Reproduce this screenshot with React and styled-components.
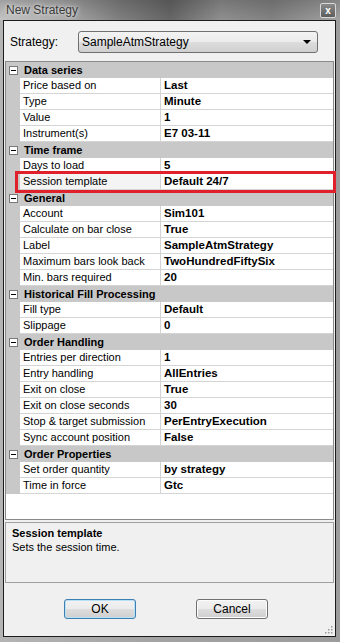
import React from "react";
import styled, { createGlobalStyle } from "styled-components";

const GlobalStyle = createGlobalStyle`
  html, body { margin: 0; padding: 0; background: #a8a8a8; }
  * { box-sizing: border-box; }
`;

const Window = styled.div`
  width: 340px;
  height: 642px;
  display: flex;
  flex-direction: column;
  background: linear-gradient(90deg, #b4b4b4 0%, #a2a2a2 50%, #9c9c9c 100%);
  font-family: "Liberation Sans", Arial, sans-serif;
  overflow: hidden;
`;

const TitleBar = styled.div`
  height: 20px;
  flex: none;
  display: flex;
  align-items: center;
  justify-content: space-between;
  padding: 0 4px 0 6px;
  background:
    linear-gradient(180deg, rgba(60,60,60,0.25) 0%, rgba(255,255,255,0.05) 100%),
    linear-gradient(90deg, #c2c2c2 0%, #a9a9a9 18%, #7a7a7a 35%, #5e5e5e 50%, #8a8a8a 65%, #7c7c7c 80%, #9e9e9e 100%);
`;

const Title = styled.span`
  font-size: 12px;
  color: #3a3a3a;
  text-shadow: 0 0 6px rgba(255,255,255,0.8), 0 0 3px rgba(255,255,255,0.6);
`;

const CloseButton = styled.div`
  width: 16px;
  height: 15px;
  margin-top: 1px;
  border: 1px solid #d8d8d8;
  border-radius: 2px;
  background: linear-gradient(180deg, #8a8a8a 0%, #5c5c5c 100%);
  color: #fff;
  font-size: 10px;
  font-weight: bold;
  display: flex;
  align-items: center;
  justify-content: center;
  line-height: 1;
`;

const Client = styled.div`
  flex: 1;
  margin: 0 4px 5px 3px;
  border: 1px solid #1c1c1c;
  background: #f0f0f0;
  display: flex;
  flex-direction: column;
  position: relative;
`;

const StrategyRow = styled.div`
  height: 40px;
  display: flex;
  align-items: flex-start;
  padding: 10px 0 0 6px;
`;

const StrategyLabel = styled.span`
  font-size: 12px;
  color: #000;
  width: 68px;
  line-height: 22px;
`;

const Combo = styled.div`
  width: 240px;
  height: 22px;
  border: 1px solid #707070;
  border-radius: 3px;
  background: linear-gradient(180deg, #f3f3f3 0%, #ebebeb 48%, #dddddd 52%, #cfcfcf 100%);
  display: flex;
  align-items: center;
  justify-content: space-between;
  padding: 0 6px 0 3px;
  font-size: 12px;
  color: #000;
`;

const Arrow = styled.span`
  width: 0;
  height: 0;
  border-left: 4px solid transparent;
  border-right: 4px solid transparent;
  border-top: 4px solid #000;
`;

const Grid = styled.div`
  margin: 0 1px 0 1px;
  height: 459px;
  border: 1px solid #8a8a8a;
  background: #fff;
  display: flex;
  flex-direction: column;
`;

const CategoryRow = styled.div`
  height: 16px;
  flex: none;
  display: flex;
  align-items: center;
  background: #c8c8c8;
  font-size: 11px;
  font-weight: bold;
  color: #000;
`;

const Expander = styled.span`
  width: 9px;
  height: 9px;
  margin: 0 6px 0 3px;
  border: 1px solid #7a7a7a;
  background: #fff;
  position: relative;
  &::after {
    content: "";
    position: absolute;
    left: 1px;
    right: 1px;
    top: 3px;
    height: 1px;
    background: #000;
  }
`;

const PropRow = styled.div`
  height: 16px;
  flex: none;
  display: flex;
  position: relative;
  font-size: 11px;
  color: #000;
`;

const Gutter = styled.div`
  width: 14px;
  flex: none;
  background: #c8c8c8;
`;

const Label = styled.div`
  width: 141px;
  flex: none;
  padding-left: 3px;
  line-height: 15px;
  border-bottom: 1px solid #d4d4d4;
  border-right: 1px solid #d4d4d4;
  background: ${(p) => (p.$selected ? "#f4f4f4" : "#fff")};
  white-space: nowrap;
  overflow: hidden;
`;

const Value = styled.div`
  flex: 1;
  padding-left: 3px;
  line-height: 15px;
  border-bottom: 1px solid #d4d4d4;
  font-weight: bold;
  font-size: 11.5px;
  white-space: nowrap;
`;

const Highlight = styled.div`
  position: absolute;
  left: 9px;
  right: -3px;
  top: -3px;
  bottom: -3px;
  border: 3px solid #e0202a;
  pointer-events: none;
`;

const HelpPanel = styled.div`
  margin: 2px 1px 0 1px;
  height: 61px;
  border: 1px solid #a0a0a0;
  background: #f0f0f0;
  padding: 3px 6px;
  font-size: 11px;
  color: #000;
`;

const HelpTitle = styled.div`
  font-weight: bold;
  line-height: 14px;
`;

const HelpText = styled.div`
  line-height: 15px;
`;

const ButtonRow = styled.div`
  display: flex;
  gap: 60px;
  padding: 16px 0 0 60px;
`;

const Button = styled.div`
  width: 72px;
  height: 20px;
  border: 1px solid ${(p) => (p.$default ? "#3c7fb1" : "#707070")};
  border-radius: 3px;
  background: linear-gradient(180deg, #f2f2f2 0%, #ebebeb 48%, #dddddd 52%, #cfcfcf 100%);
  box-shadow: ${(p) => (p.$default ? "inset 0 0 0 1px #b8e0f6" : "inset 0 0 0 1px #fcfcfc")};
  display: flex;
  align-items: center;
  justify-content: center;
  font-size: 12px;
  color: #000;
`;

const Grip = styled.svg`
  position: absolute;
  right: 2px;
  bottom: 2px;
`;

const data = [
  {
    name: "Data series",
    rows: [
      ["Price based on", "Last"],
      ["Type", "Minute"],
      ["Value", "1"],
      ["Instrument(s)", "E7 03-11"],
    ],
  },
  {
    name: "Time frame",
    rows: [
      ["Days to load", "5"],
      ["Session template", "Default  24/7", true],
    ],
  },
  {
    name: "General",
    rows: [
      ["Account", "Sim101"],
      ["Calculate on bar close", "True"],
      ["Label", "SampleAtmStrategy"],
      ["Maximum bars look back", "TwoHundredFiftySix"],
      ["Min. bars required", "20"],
    ],
  },
  {
    name: "Historical Fill Processing",
    rows: [
      ["Fill type", "Default"],
      ["Slippage", "0"],
    ],
  },
  {
    name: "Order Handling",
    rows: [
      ["Entries per direction", "1"],
      ["Entry handling", "AllEntries"],
      ["Exit on close", "True"],
      ["Exit on close seconds", "30"],
      ["Stop & target submission", "PerEntryExecution"],
      ["Sync account position", "False"],
    ],
  },
  {
    name: "Order Properties",
    rows: [
      ["Set order quantity", "by strategy"],
      ["Time in force", "Gtc"],
    ],
  },
];

export default function App() {
  return (
    <>
      <GlobalStyle />
      <Window>
        <TitleBar>
          <Title>New Strategy</Title>
          <CloseButton>x</CloseButton>
        </TitleBar>
        <Client>
          <StrategyRow>
            <StrategyLabel>Strategy:</StrategyLabel>
            <Combo>
              <span>SampleAtmStrategy</span>
              <Arrow />
            </Combo>
          </StrategyRow>
          <Grid>
            {data.map((cat) => (
              <React.Fragment key={cat.name}>
                <CategoryRow>
                  <Expander />
                  {cat.name}
                </CategoryRow>
                {cat.rows.map(([label, value, sel]) => (
                  <PropRow key={label}>
                    <Gutter />
                    <Label $selected={sel}>{label}</Label>
                    <Value>{value}</Value>
                    {sel && <Highlight />}
                  </PropRow>
                ))}
              </React.Fragment>
            ))}
          </Grid>
          <HelpPanel>
            <HelpTitle>Session template</HelpTitle>
            <HelpText>Sets the session time.</HelpText>
          </HelpPanel>
          <ButtonRow>
            <Button $default>OK</Button>
            <Button>Cancel</Button>
          </ButtonRow>
          <Grip width="10" height="10" viewBox="0 0 10 10">
            {[[8, 2], [5, 5], [8, 5], [2, 8], [5, 8], [8, 8]].map(([x, y]) => (
              <rect key={`${x}-${y}`} x={x} y={y} width="1.5" height="1.5" fill="#9a9a9a" />
            ))}
          </Grip>
        </Client>
      </Window>
    </>
  );
}
